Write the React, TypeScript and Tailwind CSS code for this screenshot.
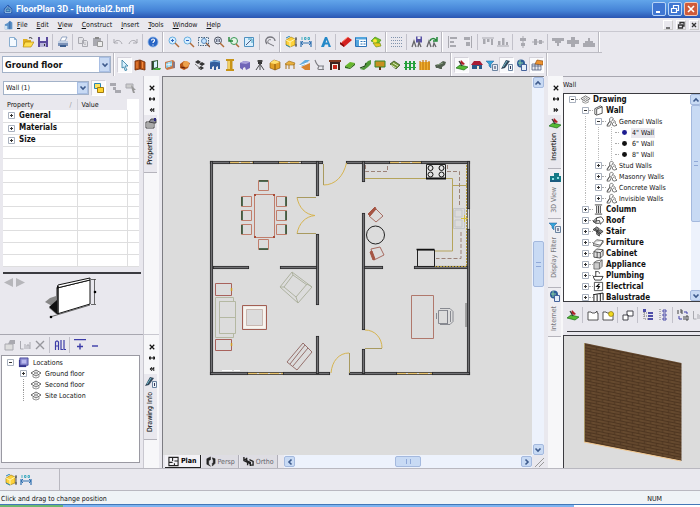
import React from "react";

type IconName = string;

const gray = "#a9a9b0";

const icons: Record<IconName, React.ReactNode> = {
  house: (<><path d="M1 6 6 1l5 5v5H1z" fill="#1d4f9f" /><path d="M2.500 6.500 6 3l3.500 3.500V10h-7z" fill="none" stroke="#bfe6ff" /><path d="M4 6h4M4 8h4" stroke="#7fd0e0" /></>),
  doc: (<><path d="M1 11V5l3-1 3-3 3 2v8z" fill="#5d92c8" /><path d="M1 7h3v4H1z" fill="#cfe2f2" /><path d="M7 2v9" stroke="#345f9c" /></>),
  new: (<><path d="M2.500 1.500h5l2 2v7h-7z" fill="#f4faff" stroke="#8aaed0" /><path d="M7.500 1.500v2h2" fill="none" stroke="#8aaed0" /></>),
  open: (<><path d="M1 3h4l1 1h3v6H1z" fill="#e0b020" /><path d="M3 6h9l-3 5H1z" fill="#ffdf50" stroke="#a87c00" strokeWidth=".6" /><path d="M7 2c2-1 3 0 3 1" stroke="#333" fill="none" /></>),
  save: (<><path d="M1 1h10v10H1z" fill="#5a4a9c" /><path d="M3 1h6v4H3z" fill="#e8e8f4" /><path d="M3 7h6v4H3z" fill="#b7b4d8" /><path d="M7 8h1v2H7z" fill="#333" /></>),
  print: (<><path d="M3 5 5 1h5L8 5z" fill="#fff" stroke="#6c84ac" strokeWidth=".7" /><path d="M1 5h10v5H1z" fill="#7d93b8" /><path d="M1 5h10v2H1z" fill="#c2d0e4" /><path d="M3 9h6v2H3z" fill="#3d5f90" /></>),
  copy: (<><path d="M1.500 1.500h4l1 1v5h-5zM5.500 4.500h4l1 1v5h-5z" fill="#e4e4e8" stroke={gray} /><path d="M7 7h2M7 8.500h2" stroke={gray} strokeWidth=".6" /></>),
  paste: (<><path d="M1 2h8v8H1z" fill={gray} /><path d="M3 1h4v2H3z" fill="#888" /><path d="M5.500 5.500h5v5h-5z" fill="#eee" stroke="#999" /></>),
  undo: (<path d="M2 3v4h4M2 7c2-4 7-3 8 1" fill="none" stroke={gray} />),
  redo: (<path d="M10 3v4H6M10 7C8 3 3 4 2 8" fill="none" stroke={gray} />),
  help: (<><circle cx="6" cy="6" r="5" fill="#2764c4" stroke="#8ab4e8" strokeWidth=".8" /><path d="M4.500 4.500c0-2 3-2 3 0 0 1-1.500 1-1.500 2.500M6 8.500v1" stroke="#fff" fill="none" strokeWidth="1.200" /></>),
  zoomin: (<><circle cx="4.500" cy="4.500" r="3.500" fill="#d8efff" stroke="#68aee0" /><path d="M3 4.500h3M4.500 3v3" stroke="#2a64c0" /><path d="m7 7 4 4" stroke="#b06a38" strokeWidth="1.500" /></>),
  zoomout: (<><circle cx="4.500" cy="4.500" r="3.500" fill="#d8efff" stroke="#68aee0" /><path d="M3 4.500h3" stroke="#2a64c0" /><path d="m7 7 4 4" stroke="#b06a38" strokeWidth="1.500" /></>),
  zoombox: (<><path d="M.5 1.500h10v8H.5z" fill="#e3eef5" stroke="#4a6480" strokeDasharray="1.500 1" /><circle cx="6" cy="5" r="2.500" fill="#c7e4ff" stroke="#5c8cc0" /><path d="m8 7 4 4" stroke="#8a5638" strokeWidth="1.400" /></>),
  pan: (<><circle cx="5" cy="4.500" r="3.500" fill="#dde6f2" stroke="#4e5260" /><path d="M3.500 6V3M5 6V2.500M6.500 6V3" stroke="#50546c" strokeWidth=".8" /><path d="m7 7 4 4" stroke="#b06a38" strokeWidth="1.500" /></>),
  zoomprev: (<><circle cx="6" cy="5" r="3.500" fill="#e4f4e4" stroke="#399858" /><path d="M1 1v4h4" stroke="#218838" fill="none" strokeWidth="1.400" /><path d="m8 8 3 3" stroke="#b06a38" strokeWidth="1.500" /></>),
  fit: (<><path d="M1.500 1.500h9v9h-9z" fill="#d8efff" stroke="#4f91c0" /><path d="m3 9 5-5" stroke="#505a80" /><path d="M5 3h4v4" fill="none" stroke="#45a0c0" /></>),
  arc: (<><path d="M3 8C0 4 3 1 6 1c3 0 5 2 5 4" fill="none" stroke="#77777e" strokeWidth="1.300" /><path d="M4 7c-1-3 2-4 3-3M4 7l6 3" stroke="#77777e" fill="none" /></>),
  box3d: (<><path d="m1 4 5-3 4 2v6l-5 2-4-2z" fill="#ffd23c" stroke="#9c7800" strokeWidth=".6" /><path d="m1 4 4 2 5-3M5 6v5" stroke="#fff6b0" fill="none" /><path d="m1 2 4-2M1 9l4 2" stroke="#2c88b8" /><path d="M11 1v10M10 3h2M10 9h2" stroke="#333" strokeWidth=".8" /></>),
  dim: (<><path d="M1 5v6M11 5v6M1 7h10" stroke="#3070b0" strokeWidth="1.200" fill="none" /><path d="m3 5-2 2 2 2M9 5l2 2-2 2" stroke="#3070b0" fill="none" /><path d="M2 1v3M4.500 1.500h1.500v2H4.500zM8 1.500h1.500v2H8z" stroke="#20a0b8" fill="none" strokeWidth=".8" /></>),
  textA: (<path d="M1 11 5 1h2l4 10H8.500L8 8.500H5L4 11zM5.500 6.500h2L6.500 4z" fill="#2388c8" fillRule="evenodd" />),
  eraser: (<><path d="m0 8 8-7 4 3-8 7z" fill="#d42020" /><path d="m0 8 4 3V9L0 6z" fill="#800c0c" /><path d="m2 6 6-5" stroke="#ff7660" /></>),
  table: (<><path d="M.5 1.500h11v9H.5z" fill="#fff" stroke="#2b72b8" /><path d="M1 1h10v2.500H1zM1 4h3v6H1z" fill="#53a5dd" /><path d="M5.500 5.500h2M8.500 5.500h2M5.500 8h2M8.500 8h2" stroke="#2b72b8" /></>),
  cash: (<><path d="m1 5 4-4 6 3-3 4z" fill="#79c421" stroke="#3c8410" strokeWidth=".6" /><circle cx="5" cy="5" r="2" fill="#ffe636" /><path d="m3 7 7 0 1 3-5 1z" fill="#e8c820" stroke="#5c8b10" strokeWidth=".6" /></>),
  grid: (<g fill="#8093ad">{[1, 4, 7, 10].map((y) => [0, 2, 4, 6, 8, 10].map((x) => <rect key={x + "-" + y} x={x} y={y} width="1" height="1" />))}</g>),
  findsave: (<><path d="M5 .5h6v6H5z" fill="#5750a4" /><path d="M6.500.5h3v2.500h-3z" fill="#eee" /><path d="M1 11 3 5l2 6M7 11l1-5 2 5" stroke="#66666a" strokeWidth="1.300" fill="none" /></>),
  findgo: (<><path d="M1 11 3 5l2 6M7 11l1-4 2 4" stroke="#66666a" strokeWidth="1.300" fill="none" /><path d="M4 5c1-3 4-3 6-1M11 1v4H7" stroke="#238838" strokeWidth="1.500" fill="none" /></>),
  alL: (<><path d="M1.500 0v12" stroke={gray} /><path d="M3 1h7v2H3zM3 5h4v2H3zM3 9h6v2H3z" fill={gray} /></>),
  alR: (<><path d="M9.500 0v12" stroke={gray} /><path d="M2 1h6v3H2zM4 6h4v4H4z" fill={gray} /></>),
  alT: (<><path d="M0 2h12" stroke={gray} /><path d="M1 3h2.500v5H1zM5 3h2.500v3H5zM9 3h2v6H9z" fill={gray} /></>),
  alB: (<><path d="M0 10h12" stroke={gray} /><path d="M1 5h2.500v4H1zM5 2h2.500v7H5zM9 6h2v3H9z" fill={gray} /></>),
  alV: (<><path d="M6 0v12" stroke={gray} /><path d="M3 2h6v3H3zM4 7h4v3H4z" fill={gray} /></>),
  alH: (<><path d="M0 6h12" stroke={gray} /><path d="M2 3h3v6H2zM7 4h3v4H7z" fill={gray} /></>),
  up: (<path d="M0 2h12v3H9v2H7v3H5V7H3V5H0z" fill={gray} />),
  mid: (<path d="M4 1h4v3h4v4H8v3H4V8H0V4h4z" fill={gray} />),
  low: (<path d="M5 2h2v3h3v2h2v4H0V7h2V5h3z" fill={gray} />),
  cursor: (<path d="m3 1 6 6H6l2 4-2 .5L5 8 3 9z" fill="#d9f1ff" stroke="#2d7aa0" strokeWidth=".8" />),
  door: (<><path d="M1 2 6 1v9l-5 1zM6 1l5 2v8L6 10z" fill="#c05818" stroke="#702c08" strokeWidth=".8" /><path d="M3 3v6M8.500 3v6" stroke="#f08a40" /></>),
  doorg: (<><path d="M3 2 9 1v8l-6 2z" fill="#345c38" /><path d="m5 3 3-1v6L5 9z" fill="#d9f1ff" /><path d="M2 11h9l1-2H9" fill="#43aa38" /><path d="M3 2v9" stroke="#222" /></>),
  window: (<><path d="m1 3 8-2 2 2v6l-8 2-2-2z" fill="#c87848" /><path d="m2 4 6-2v5L2 9z" fill="#83cce8" /><path d="M5 3v5M2 6l6-1" stroke="#fff" strokeWidth=".8" /><path d="M10 3v6" stroke="#4a78c0" /></>),
  pot: (<><path d="m1 5 4-3 6 2-2 5-4 2-4-2z" fill="#b85818" /><circle cx="7" cy="5" r="3" fill="#eda24c" /><path d="m2 8 4 1" stroke="#60200a" /></>),
  blocks: (<><path d="m1 3 3-2 3 2-3 2zM5 5l3-2 3 2-3 2zM4 9l3-2 3 2-3 2z" fill="#333" /><path d="m1 5 6 5" stroke="#777" /></>),
  wall: (<><path d="m1 3 4-2 6 1v8H9V7L7 8v3H5V7L3 8v2H1z" fill="#315c9c" /><path d="m1 3 4-1 6 1" stroke="#89c0ef" fill="none" /></>),
  column: (<><path d="M2 0h8v2H8.500v8H10v2H2v-2h1.500V2H2z" fill="#c89418" /><path d="M5 2v8" stroke="#ffe480" strokeWidth="1.500" /></>),
  purple: (<><path d="m1 4 4-2 6 1v6l-4 2-1-3-2 1v2L1 9z" fill="#7066b8" /><path d="m1 4 4-2 6 1-4 2z" fill="#aaa2dc" /></>),
  tripod: (<><path d="M4 1h4v4H4z" fill="#333" /><path d="M6 4v7M6 5l-4 6M6 5l4 6" stroke="#48484c" /><path d="M3 2h6" stroke="#555" /></>),
  cube: (<><path d="m1 4 4-3 6 2v6l-5 2-5-2z" fill="#e1a025" stroke="#805008" strokeWidth=".6" /><path d="m1 4 4-3 6 2-5 2z" fill="#ffe070" /><path d="M6 5v6" stroke="#805008" /></>),
  stool: (<><path d="m1 5 4-3 6 2-1 2H3z" fill="#e9b040" stroke="#9a6810" strokeWidth=".6" /><path d="M2 5v5M5 6v4M10 5v5" stroke="#a87018" /></>),
  ramp: (<><path d="m0 6 6-5h5L4 7z" fill="#65aee0" /><path d="m2 8 9-4v7H6z" fill="#d88430" /><path d="m0 7 8-3" stroke="#fff" /></>),
  chair: (<path d="M1 1c1 3 2 5 4 6h5M5 7c-1 2-2 3 0 3.500h5M9 7v3" stroke="#7d7d83" strokeWidth="1.100" fill="none" />),
  fire: (<><path d="M0 1h12v2H0z" fill="#803c20" /><path d="M1 3h10v8H1z" fill="#3b241c" /><path d="M3 5h6v6H3z" fill="#f2eee0" /><path d="M4 6h4v4H4z" fill="#c82818" /></>),
  green1: (<><path d="m1 7 5-4 5 1-5 5z" fill="#68b82c" /><path d="m1 7 5 2 5-5v2L6 10 1 9z" fill="#2f6c18" /></>),
  green2: (<><path d="M1 10 7 7V4l2-2 3-1v4L9 8l-4 3z" fill="#4f9838" /><path d="m1 9 5-2 1-3" stroke="#204c18" fill="none" strokeWidth="1.200" /></>),
  sign: (<><path d="M1 2h10v6H1z" fill="#c89020" stroke="#32882c" /><path d="M5 8h2v3H5z" fill="#603810" /></>),
  green3: (<><path d="m1 5 4-3 6 4-4 4z" fill="#759838" stroke="#284418" strokeWidth=".7" /><path d="m2 6 5 3M4 4l5 3" stroke="#dce8c0" /></>),
  fenceg: (<path d="M1 2h2v9H1zM5 2h2v9H5zM9 2h2v9H9zM0 4h12v1H0zM0 8h12v1H0z" fill="#25a03c" />),
  fencey: (<><path d="M1 3h10v8H1z" fill="#f0b030" /><path d="M1 2v9M4 1v10M7 1v10M10 2v9" stroke="#c37b10" strokeWidth="1.200" /></>),
  rock: (<><path d="m1 6 4-1 4-3 3 1-1 3-3 2v2H6L4 9H2z" fill="#526050" /><path d="m3 6 6-2" stroke="#88a080" /></>),
  insert: (<><path d="m0 9 4-3 8 2-4 3z" fill="#57bb34" stroke="#1d6a1a" strokeWidth=".7" /><path d="m5 1 4 4-2 1-3-2z" fill="#b02028" /><path d="m3 2 3 5" stroke="#333" strokeWidth="1.200" /></>),
  home: (<><path d="M0 6 3 2h6l3 4z" fill="#a81c34" /><path d="M1 6h10v4H1z" fill="#285888" /><path d="M6 7h2v3H6z" fill="#f4e8d0" /></>),
  filter: (<><path d="M0 2h8L5 5v4L3 7V5z" fill="#36a4d8" stroke="#205a98" strokeWidth=".5" /><path d="M6.500 5.500h5v6h-5z" fill="#e6edf5" stroke="#6a83a0" /><path d="M9 7v3" stroke="#335" /></>),
  pen: (<><path d="M0 10 5 1l4 1-5 7z" fill="#33485c" /><path d="m2 8 4-6" stroke="#70b8c8" /><path d="M7.500 5.500h4v6h-4z" fill="#eef5fa" stroke="#6a83a0" /><path d="M9.500 7v3" stroke="#335" /></>),
  world: (<><circle cx="5" cy="4.500" r="4" fill="#2d5c98" /><path d="M2 4h5M4 1v6" stroke="#88d0a0" /><path d="M5.500 5.500h5v6h-5z" fill="#e5eef9" stroke="#44629a" /></>),
  hand: (<><path d="M1 5h9v6H1z" fill="#e8e8ee" stroke="#506080" strokeWidth=".8" /><path d="M4 5 6 1l6 1v4z" fill="#ed9230" stroke="#85450c" strokeWidth=".6" /><path d="M1 7h9M4 5v6M7 5v6" stroke="#506080" strokeWidth=".8" /></>),
  propg: (<><path d="M1 5h8v6H1z" fill="#ddd" stroke={gray} /><path d="M4 5 6 1h5v4z" fill={gray} /></>),
  props: (<><path d="M1 5h8v6H1z" fill="#fff" stroke="#444" /><path d="M4 5 6 2h5v4H9z" fill="#8c8c98" stroke="#222" strokeWidth=".7" /><path d="M9 1h2v3H9z" fill="#2e2a80" /><path d="M2 7h6M2 9h6" stroke="#555" /></>),
  selY: (<><path d="M1.500 1.500h6v5h-6z" fill="#ffe25c" stroke="#2a86b0" /><path d="M4.500 5.500h6v5h-6z" fill="#ffd22a" stroke="#a07c10" /></>),
  selG: (<><path d="M1 1h6v3H1zM4 5h3v3H4zM6 8h6v3H6z" fill={gray} /></>),
  selC: (<><path d="M1 2h7v4H1z" fill="#ccc" stroke={gray} /><path d="m6 3 5 5H9l1 3H8L7 8z" fill="#999" /></>),
  linkg: (<path d="M1.500 2v8h3M6 5v5M8 10V6h2v4M11 3v7" fill="none" stroke={gray} />),
  del: (<path d="m2 2 8 8M10 2l-8 8" stroke="#97979d" strokeWidth="1.400" />),
  all: (<path d="M1.500 11V3l1-1h1l1 1v8M1.500 7h3M7 1v10M7 10.500h2M10 1v10M10 10.500h2" fill="none" stroke="#3c3ca8" strokeWidth="1.200" />),
  plus: (<path d="M0 .5h12M6 4.500v6M3 7.500h6" stroke="#3c3ca8" strokeWidth="1.400" />),
  minus: (<path d="M3 7h6" stroke="#3c3ca8" strokeWidth="1.400" />),
  locs: (<><path d="M1 3h8v8H1z" fill="#34348c" /><path d="M2 1h9v8H2z" fill="#8c8cd0" stroke="#34348c" strokeWidth=".8" /><path d="M4 3h5v4H4z" fill="#b9b9ee" /></>),
  layer: (<><path d="m1 5 5-3 5 3-5 3z" fill="#fff" stroke="#444" strokeWidth=".8" /><path d="m4 5 2-1 2 1-2 1zM3 7v2l3 1 3-1V7" fill="none" stroke="#777" strokeWidth=".8" /></>),
  tWall: (<path d="m2 4 6-3 2 1v7l-6 2-2-1zM4 4.500v6M4 4.500 10 2" fill="#fff" stroke="#222" strokeWidth=".8" />),
  tGroup: (<path d="m1 10 3-4V3l2-2 2 2-2 3M4 6l2 1-2 4H1zM8 4l2 2v2l2 2-3 1-2-1V8l2-2" fill="none" stroke="#444" strokeWidth=".8" />),
  tColumn: (<path d="M2 1h8M2 11h8M4 2v8M8 2v8M6 2v8" stroke="#222" strokeWidth=".9" />),
  tRoof: (<path d="m0 7 4-4 5-1 3 4-4 4-1-4zM4 3 3 9 0 7M3 9h4" fill="none" stroke="#222" strokeWidth=".9" />),
  tStair: (<path d="m0 4 4-3 3 2-3 3zM4 6l4-2 3 2-4 3zM4 6v3l3 2V9M2 3l7 6" fill="#888" stroke="#222" strokeWidth=".8" />),
  tFurn: (<path d="m0 7 4-4 7 1-3 5zM0 7v2l7 2 4-5V4" fill="#ddd" stroke="#444" strokeWidth=".8" />),
  tCab: (<path d="m1 4 3-3 7 1v6l-3 3-7-1zM1 4l7 1 3-3M8 5v6M4.500 4.500v6" fill="#ddd" stroke="#222" strokeWidth=".8" />),
  tApp: (<path d="m1 4 3-2 6-1v7l-3 3H1zM1 4h6l3-3M7 4v7" fill="#ccc" stroke="#555" strokeWidth=".8" />),
  tPlumb: (<path d="M3 1v6M3 2c3-1 4 0 4 2M0 7h11l-2 4H2z" fill="#fff" stroke="#222" strokeWidth=".9" />),
  tElec: (<><path d="M1.500 1.500h9v9h-9z" fill="#fff" stroke="#333" strokeWidth=".9" /><path d="m7 3-3 3h3L5 9" stroke="#111" fill="none" strokeWidth="1.200" /></>),
  tBal: (<path d="M0 3 11 1M1 3v8M4.500 3v8M8 2v8M11 1v8" stroke="#222" strokeWidth="1.100" />),
  dotB: (<circle cx="6" cy="6" r="2.700" fill="#1c1c90" />),
  dotK: (<circle cx="6" cy="6" r="2.700" fill="#111" />),
  folder: (<path d="M1 3h3l1 1h3l2-2v2h1v7H1z" fill="#fff" stroke="#444" strokeWidth=".9" />),
  foldery: (<><path d="M1 3h3l1 1h6v7H1z" fill="#fff" stroke="#444" strokeWidth=".9" /><circle cx="9" cy="5" r="2.500" fill="#f0d820" stroke="#806c00" strokeWidth=".6" /></>),
  multi: (<path d="M1 6h5v5H1zM5 2h6v5H6V6H5z" fill="#fff" stroke="#44444c" />),
  treeI: (<><path d="M2 1v9h4M2 4h4M2 7h4" fill="none" stroke="#777" strokeDasharray="1 1" /><path d="M1 0h3v3H1zM6 3h5v2H6zM6 6h5v2H6zM6 9h5v2H6z" fill="#4d4da8" /></>),
  listI: (<><path d="M3 0v12" stroke="#777" strokeDasharray="1 1" /><path d="M6 1h3v2H6zM6 5h3v2H6zM6 9h3v2H6z" fill="none" stroke="#4d4da8" /></>),
  swap: (<><path d="M1 1v4M3 1h2v4M5 3H3M7 7v4M9 7h2v4H9z" fill="none" stroke="#444" /><path d="M7 3h3v2M2 7v3h3" fill="none" stroke="#3c3ca8" /></>),
  view3: (<><path d="M1 5h4V2h5v3h2v6H1z" fill="#157a86" /><path d="M3 7h2v2H3zM8 6h2v2H8z" fill="#8ee0e4" /><path d="M1 10h10" stroke="#223b78" /></>),
  planI: (<path d="M1 1.500h10v9H1zM5 1.500v4M1 7h4M7 5.500h4M7 8v2.500" fill="none" stroke="#222" strokeWidth="1.200" />),
  perspI: (<path d="m2 3 4-2v3L4 5v4l2 2-4-2zM8 2l3 1v5L8 11V8l1-1V5z" fill="#222" stroke="#222" strokeWidth=".6" />),
  orthoI: (<path d="M1 1v4l4 2v3M4 2v3l4 2v4M7 4l4 2v4H8M2 3l6 6" fill="none" stroke="#222" strokeWidth="1.500" />),
};

function Icon({ n, c = "size-3" }: { n: IconName; c?: string }) {
  return (
    <svg viewBox="0 0 12 12" className={"shrink-0 " + c} aria-hidden="true">
      {icons[n]}
    </svg>
  );
}

function Tool({ n, on }: { n: IconName; on?: boolean }) {
  return (
    <button type="button" aria-label={n} className={"flex h-4 w-[15px] shrink-0 items-center justify-center " + (on ? "border border-[#d4d2da] border-r-white border-b-white bg-[#fafafc]" : "")}>
      <Icon n={n} />
    </button>
  );
}

function Tools({ names, on = [] }: { names: string[]; on?: string[] }) {
  return <>{names.map((n, i) => <Tool key={i} n={n} on={on.includes(n)} />)}</>;
}

const Sep = () => <span className="mx-[2px] h-4 w-px shrink-0 bg-[#c2c1ca]" />;
const Edge = () => <span className="mx-[2px] w-[2px] shrink-0 self-stretch border-r border-white bg-[#b9b8c0]" />;

function Chevron({ d = "down" }: { d?: "down" | "up" | "left" | "right" }) {
  const p = { down: "m1.500 2.500 2.500 2.500L6.500 2.500", up: "M1.500 5.500 4 3l2.500 2.500", left: "M5.500 1.500 3 4l2.500 2.500", right: "M2.500 1.500 5 4 2.500 6.500" }[d];
  return <svg viewBox="0 0 8 8" className="size-2" aria-hidden="true"><path d={p} fill="none" stroke="#3d5a8c" strokeWidth="1.600" /></svg>;
}

function ScrollBtn({ d }: { d: "down" | "up" | "left" | "right" }) {
  return (
    <button type="button" aria-label={"Scroll " + d} className="flex size-[11px] shrink-0 items-center justify-center rounded-xs border border-[#a4b9de] bg-[#c8daf4]">
      <Chevron d={d} />
    </button>
  );
}

function Combo({ label, value, cls }: { label: string; value: string; cls: string }) {
  return (
    <div className={"relative border border-[#a3b2c8] bg-white " + cls}>
      <select aria-label={label} defaultValue={value} className="block size-full appearance-none bg-transparent pl-[2px] outline-none">
        <option>{value}</option>
      </select>
      <span className="pointer-events-none absolute inset-y-0 right-0 flex w-[11px] items-center justify-center border border-[#a9bfe4] bg-[#c8daf4]">
        <Chevron />
      </span>
    </div>
  );
}

const menus = ["File", "Edit", "View", "Construct", "Insert", "Tools", "Window", "Help"];

function TitleBar() {
  return (
    <header className="flex h-[18px] items-center bg-linear-to-b from-[#62a5ea] via-[#4482d6] via-60% to-[#2a55b2] pr-[2px] pl-[3px]">
      <Icon n="house" c="size-[10px]" />
      <h1 className="ml-[3px] flex-1 font-[Roboto,'Liberation_Sans',sans-serif] text-[9px] leading-3 font-bold text-white">FloorPlan 3D - [tutorial2.bmf]</h1>
      <div className="flex gap-[2px]">
        <button type="button" aria-label="Minimize" className="flex size-[14px] items-center justify-center rounded-xs border border-[#b8d4f6] bg-[#3f76d2]">
          <svg viewBox="0 0 10 10" className="size-[10px]"><path d="M2 8h4" stroke="#fff" strokeWidth="2" /></svg>
        </button>
        <button type="button" aria-label="Restore" className="flex size-[14px] items-center justify-center rounded-xs border border-[#b8d4f6] bg-[#3f76d2]">
          <svg viewBox="0 0 10 10" className="size-[10px]"><path d="M1.500 4.500h5v4h-5zM3.500 4V1.500h5v5H7" fill="none" stroke="#fff" strokeWidth="1.200" /></svg>
        </button>
        <button type="button" aria-label="Close" className="flex size-[14px] items-center justify-center rounded-xs border border-[#f0c8b8] bg-[#cf5a3a]">
          <svg viewBox="0 0 10 10" className="size-[10px]"><path d="m2 2 6 6M8 2 2 8" stroke="#fff" strokeWidth="1.600" /></svg>
        </button>
      </div>
    </header>
  );
}

function MenuBar() {
  return (
    <nav className="flex h-[13px] items-center pr-[1px] pl-[4px]">
      <Icon n="doc" c="size-[10px]" />
      <div className="ml-[3px] flex flex-1 gap-[9px]">
        {menus.map((m) => (
          <button key={m} type="button"><span className="underline">{m[0]}</span>{m.slice(1)}</button>
        ))}
      </div>
      <div className="flex gap-[3px]">
        {["M2 7h4", "M1.500 4h4v3h-4zM3 3V1.500h4V5H6", "m2 2 4 4M6 2 2 6"].map((d, i) => (
          <button key={d} type="button" aria-label={["Minimize drawing", "Restore drawing", "Close drawing"][i]} className="flex size-[10px] items-center justify-center border border-white border-r-[#ccc] border-b-[#ccc]">
            <svg viewBox="0 0 8 8" className="size-2"><path d={d} fill="none" stroke="#333" strokeWidth="1.300" /></svg>
          </button>
        ))}
      </div>
    </nav>
  );
}

function Toolbars() {
  return (
    <>
      <div role="toolbar" aria-label="Standard" className="flex h-[22px] border-t border-[#c9c8d0]">
        <div className="flex items-center border-b border-[#bdbcc4] pl-[5px]">
          <Tools names={["new", "open", "save"]} /><Sep />
          <Tools names={["print"]} /><Sep />
          <Tools names={["copy", "paste"]} /><Sep />
          <Tools names={["undo", "redo"]} /><Sep />
          <Tools names={["help"]} /><Edge />
          <div className="flex w-[91px] justify-between"><Tools names={["zoomin", "zoomout", "zoombox", "pan", "zoomprev", "fit"]} /></div><Sep />
          <Tools names={["arc"]} /><Edge />
          <Tools names={["box3d", "dim"]} /><Sep />
          <Tools names={["textA"]} /><Sep />
          <Tools names={["eraser", "table", "cash"]} /><Edge />
          <Tools names={["grid"]} /><Sep />
          <Tools names={["findsave", "findgo"]} /><Edge />
          <Tools names={["alL", "alR"]} /><Sep />
          <Tools names={["alT", "alB"]} /><Sep />
          <Tools names={["alV", "alH"]} /><Sep />
          <div className="flex w-[46px] justify-between"><Tools names={["up", "mid", "low"]} /></div><Edge />
        </div>
      </div>
      <div role="toolbar" aria-label="Building" className="flex h-[23px]">
        <div className="flex items-center pl-[2px]">
          <Combo label="Floor" value="Ground floor" cls="h-[17px] w-[109px] text-[9px] font-bold" />
          <Edge />
          <div className="flex w-[331px] justify-between">
            <Tools on={["cursor"]} names={["cursor", "door", "doorg", "window", "pot", "blocks", "wall", "column", "purple", "tripod", "cube", "stool", "ramp", "chair", "fire", "green1", "green2", "sign", "green3", "fenceg", "fencey", "rock"]} />
          </div>
          <Edge />
          <Tools on={["insert", "pen", "hand"]} names={["insert", "home", "filter", "pen", "world", "hand"]} />
          <Edge />
        </div>
      </div>
    </>
  );
}

function StripControls({ side }: { side: "l" | "r" }) {
  return (
    <div className="flex flex-col items-center pt-[6px]">
      {[["Close", "m1 1 6 6M7 1 1 7"], ["Resize", "M0 4h8M2 2 0 4l2 2M6 2l2 2-2 2"], ["Collapse", side === "l" ? "M4 2 2 4l2 2M7 2 5 4l2 2" : "m1 2 2 2-2 2M4 2l2 2-2 2"]].map(([a, d]) => (
        <button key={a} type="button" aria-label={a} className="flex h-[11px] items-center">
          <svg viewBox="0 0 8 8" className="size-[6px]"><path d={d} fill="none" stroke="#111" strokeWidth="1.600" /></svg>
        </button>
      ))}
    </div>
  );
}

function SideTab({ icon, label, active, cls }: { icon: string; label: string; active?: boolean; cls: string }) {
  return (
    <button type="button" className={"flex w-[13px] shrink-0 flex-col items-center gap-1 border-b border-[#b5b4bc] pt-[2px] " + (active ? "bg-[#e9e8ee] text-black " : "bg-[#efeef2] text-[#77777c] ") + cls}>
      <Icon n={icon} />
      <span className="rotate-180 text-[7px] leading-[9px] whitespace-nowrap [writing-mode:vertical-rl]">{label}</span>
    </button>
  );
}

function Expander({ open }: { open?: boolean }) {
  return (
    <button type="button" aria-label={open ? "Collapse" : "Expand"} className="size-[7px] shrink-0 bg-white">
      <svg viewBox="0 0 7 7" className="size-[7px]"><path d="M.5.5h6v6h-6z" fill="none" stroke="#a9b1be" /><path d={open ? "M2 3.500h3" : "M2 3.500h3M3.500 2v3"} stroke="#333" /></svg>
    </button>
  );
}

function PropertyPanel() {
  const names = ["General", "Materials", "Size", "", "", "", "", "", "", "", "", "", ""];
  return (
    <section aria-label="Properties" className="flex h-[259px] flex-col border-b border-[#a8a7b0] pr-[2px] pl-[3px]">
      <div className="flex h-[23px] items-center gap-[1px]">
        <Combo label="Selection" value="Wall (1)" cls="mr-px h-[14px] w-[86px]" />
        <Tools on={["selY"]} names={["selY", "selG", "selC"]} />
      </div>
      <table className="w-[136px] table-fixed border-collapse bg-white">
        <thead>
          <tr className="h-[11px] bg-[#e9e8ee] text-left">
            <th className="w-[74px] border-r border-[#d0d0d8] pl-[4px] font-normal"><span className="flex justify-between pr-[5px]">Property<span className="text-[#999]">/</span></span></th>
            <th className="w-[50px] pl-[4px] font-normal">Value</th>
            <th className="bg-white" aria-label="Extra" />
          </tr>
        </thead>
        <tbody>
          {names.map((n, i) => (
            <tr key={i} className="h-[12px] border-b border-[#dededf]">
              <td className="border-r border-[#dededf] p-0 pl-[5px] text-[8px] font-bold">
                {n && <span className="flex items-center gap-[4px]"><Expander />{n}</span>}
              </td>
              <td className="border-r border-[#dededf] p-0" />
              <td className="p-0" />
            </tr>
          ))}
        </tbody>
      </table>
      <div className="mt-auto h-[62px] border-t-2 border-[#3b3b40]">
        <div className="flex">
          <div className="flex gap-px pt-[3px]">
            {["M10 0v10L0 5z", "M0 0v10l10-5z"].map((d, i) => (
              <button key={d} type="button" aria-label={i ? "Next" : "Previous"} className="h-[10px]"><svg viewBox="0 0 10 10" className="h-[9px] w-[11px]"><path d={d} fill="#b6b6ba" /></svg></button>
            ))}
          </div>
          <svg viewBox="45 276 54 44" className="mt-[3px] ml-[19px] h-[44px] w-[54px]" aria-label="Wall preview">
            <path d="m45 301 5-4 6-2v18l-7-6 3-2z" fill="#888" /><path d="m49 306 8-7v14z" fill="#111" />
            <path d="M57 287 90 279v24l-33 10z" fill="#fff" stroke="#111" />
            <path d="m57 287 1-3 32-7v2z" fill="#fff" stroke="#111" />
            <path d="M58 285v28" stroke="#111" strokeWidth="1.500" />
            <path d="m50 316 40-12M94.500 278v25M91 278.500h5M91 303.500h5" stroke="#444" strokeWidth=".8" />
            <circle cx="51" cy="316" r="1.300" /><circle cx="95" cy="291" r="1.300" />
          </svg>
        </div>
      </div>
    </section>
  );
}

function LocationPanel() {
  return (
    <section aria-label="Drawing Info" className="flex flex-1 flex-col pr-[3px] pb-[5px] pl-[1px]">
      <div className="flex h-[20px] items-center pl-px">
        <Tools names={["propg", "linkg", "del"]} /><Sep /><Tools names={["all"]} /><Sep /><Tools names={["plus", "minus"]} />
      </div>
      <ul className="flex-1 border border-[#9a99a2] bg-white pt-[1px]">
        <li className="flex h-[11px] items-center gap-[4px] pl-[5px]"><Expander open /><Icon n="locs" c="size-[11px]" />Locations</li>
        {["Ground floor", "Second floor", "Site Location"].map((t, i) => (
          <li key={t} className="flex h-[11px] items-center gap-[3px] pl-[18px]">
            {i === 0 ? <Expander /> : <span className="ml-[3px] h-full w-[4px] border-l border-dotted border-[#999]" />}
            <Icon n="layer" />{t}
          </li>
        ))}
      </ul>
    </section>
  );
}

const wallFill = "#717174";

function FloorPlan() {
  const walls: [number, number, number, number][] = [
    [210, 161, 20, 3], [253, 161, 26, 3], [301, 161, 22, 3], [346, 161, 44, 3], [421, 161, 49, 3],
    [210, 161, 3, 214], [467, 161, 3, 48], [467, 229, 3, 146],
    [210, 372, 38, 3], [283, 372, 47, 3], [349, 372, 48, 3], [432, 372, 38, 3],
    [316, 161, 3, 35], [316, 234, 3, 71], [316, 336, 3, 38],
    [362, 161, 3, 21], [362, 213, 3, 117], [362, 349, 3, 25],
    [213, 266, 36, 3], [280, 266, 37, 3], [364, 266, 19, 3], [414, 266, 54, 3],
  ];
  const chairs: [number, number, number][] = [[258, 180, 90], [258, 239, 270], [241, 196, 0], [241, 210, 0], [241, 224, 0], [276, 196, 180], [276, 210, 180], [276, 224, 180]];
  return (
    <svg viewBox="208 158 264 220" className="h-[220px] w-[264px] shrink-0" fill="none" role="img" aria-label="Ground floor plan">
      <g>
        {[[230, 161, 23], [279, 161, 22], [390, 161, 31], [248, 372, 35], [397, 372, 35]].map(([x, y, w]) => (
          <g key={x + "-" + y}><path d={`M${x} ${y + 0.5}h${w}M${x} ${y + 2.5}h${w}`} stroke="#5c5446" /><path d={`M${x} ${y + 1.5}h${w}`} stroke="#e6c069" strokeDasharray="9 2" /></g>
        ))}
        <path d="M467.500 209v20M469.500 209v20M466 303v24" stroke="#666" />
      </g>
      <g fill={wallFill} stroke="#2b2b2d" strokeWidth=".9">
        {walls.map(([x, y, w, h], i) => <rect key={i} x={x + 0.4} y={y + 0.4} width={w - 0.8} height={h - 0.8} />)}
      </g>
      <g stroke="#d6b450">
        <path d="M323.500 185c12 0 20-9 23-22M297 197.500c2 10 8 17 18 18-10 1-16 8-18 18M331 373c1-12 8-20 18-20M365 330c10 0 17 8 17 18" />
        <path d="M323.500 164v21M297 197.500h19M297 233.500h19M349.500 353v20M365 348.500h17" stroke="#a89a60" />
      </g>
      <g stroke="#c07e6c">
        <path d="M254.500 194.500h20v43h-20z" />
        {chairs.map(([x, y, r], i) => (
          <g key={i} transform={`rotate(${r} ${x + 5.5} ${y + 5.5})`}><path d={`M${x + 0.5} ${y + 0.5}h10v10h-10z`} /><path d={`M${x + 1} ${y + 1}v9`} stroke="#2c5134" strokeWidth="1.600" /></g>
        ))}
      </g>
      <g fill="#a84c38">{[254, 273].map((x) => [194, 236].map((y) => <rect key={x + "-" + y} x={x} y={y} width="2" height="2" />))}</g>
      <path d="M215.500 283.500h16v12h-16zM215.500 339.500h16v11h-16z" stroke="#a8625c" /><path d="M231.500 288v3M231.500 343v3" stroke="#cf9c20" strokeWidth="1.500" />
      <path d="M215.500 297.500h18v4h-14v32h14v4h-18zM219.500 301.500h16v32h-16M219.500 317.500h16" stroke="#b4b8a2" />
      <path d="M242.500 305.500h24v24h-24z" stroke="#a35e52" /><path d="M245 308h19v19h-19z" stroke="#f8f4ee" strokeWidth="3" /><path d="M246.500 309.500h16v16h-16z" stroke="#b9a49c" strokeWidth=".7" />
      <path d="m280 287 12-15 20 15-14 16zM292 272l1 3-9 12-4 0M284 287l12 10 2 6M296 297l11-13 5 3M293 275l14 10" stroke="#aeb2a0" />
      <path d="m287 362 16-19 9 9-15 18zM293 366l15-18M290 364l15-19" stroke="#96706c" />
      <path d="M222 370.500h10M234 370.500h6" stroke="#fff" />
      <path d="M365 178.500h61M446 178.500h6.500V251H435M452.500 185.500H467" stroke="#b5a45c" />
      <path d="M365.500 165v6.500h22V165M447 171.500h12.500V206M447.500 165v6M461 232v26.500h-25" stroke="#9b8278" strokeDasharray="4 2" />
      <path d="M466.500 165v101.500H435" stroke="#b79d3c" strokeDasharray="2 1" />
      <path d="M426.500 164.500h19v14h-19z" stroke="#222" fill="#e4e4e4" /><path d="M426 178.500h20" stroke="#111" strokeWidth="2" />
      <g stroke="#111">{[430.500, 441.500].map((x) => [168, 174.500].map((y) => <circle key={x + "-" + y} cx={x} cy={y} r="2.500" />))}</g>
      <path d="M453.500 208.500h11v20h-11zM455 210h7v7h-7zM455 220h7v7h-7z" stroke="#c3c5c8" /><path d="M461 218.500h7M464.500 215v7" stroke="#d6bd3c" />
      <path d="M417.500 250h17v16.500h-17z" stroke="#222" /><path d="M416.500 249.500h18" stroke="#111" strokeWidth="1.500" />
      <circle cx="375.500" cy="235" r="9" stroke="#222" />
      <path d="m369 216 7-7 7 7-7 6zM371 249l9-2 4 8-10 5z" stroke="#a66b60" /><path d="m368 214 7-7 1 2-6 7zM370 252l3 8 2-1-3-8z" fill="#a55544" stroke="#a55544" />
      <path d="M411.500 295.500h22v43h-22z" stroke="#b0786c" />
      <path d="M438.500 310.500h9v13h-9zM440 308.500h10l3 3v10l-3 3h-10M447.500 310v14M450.500 311v11M436.500 313v6" stroke="#7e8088" strokeWidth=".9" />
    </svg>
  );
}

function DrawingArea() {
  const tabs: [string, string][] = [["planI", "Plan"], ["perspI", "Persp"], ["orthoI", "Ortho"]];
  return (
    <main className="flex min-w-0 flex-1 flex-col border-t border-l border-[#7c7c82] bg-[#e9e8ee]">
      <div className="flex flex-1">
        <div className="flex flex-1 items-center justify-center bg-[#dcdcdc] pt-[3px] pr-[16px]"><FloorPlan /></div>
        <div className="flex w-[12px] flex-col items-center bg-[#edf2fc]">
          <ScrollBtn d="up" />
          <div className="flex-[42]" />
          <div className="flex h-[46px] w-[11px] items-center justify-center rounded-xs border border-[#a4b9de] bg-[#c8daf4]"><span className="h-[5px] w-[5px] border-y border-[#8fa8d8]" /></div>
          <div className="flex-[43]" />
          <ScrollBtn d="down" />
        </div>
      </div>
      <div className="flex h-[13px]">
        <div role="tablist" className="flex pl-[2px]">
          {tabs.map(([i, t], k) => (
            <button key={t} type="button" role="tab" aria-selected={k === 0} className={"mr-px flex items-center gap-[2px] border-r px-[3px] " + (k === 0 ? "border-b border-[#222] bg-[#f3f2f6] font-bold text-black" : "border-[#b0afb8] bg-[#dedde3] text-[#66666c]")}>
              <Icon n={i} c="size-[11px]" />{t}
            </button>
          ))}
        </div>
        <div className="ml-auto flex w-[248px] items-center justify-between bg-[#edf2fc]">
          <ScrollBtn d="left" />
          <div className="flex h-[11px] w-[26px] items-center justify-center rounded-xs border border-[#a4b9de] bg-[#c8daf4]"><span className="h-[5px] w-[5px] border-x border-[#8fa8d8]" /></div>
          <ScrollBtn d="right" />
        </div>
        <svg viewBox="0 0 12 12" className="size-[12px]"><path d="M3 12 12 3M7 12l5-5" stroke="#999" /></svg>
      </div>
    </main>
  );
}

type Node = { l: number; t: string; i: string; open?: boolean; leaf?: boolean; sel?: boolean };
const tree: Node[] = [
  { l: 0, t: "Drawing", i: "layer", open: true }, { l: 1, t: "Wall", i: "tWall", open: true },
  { l: 2, t: "General Walls", i: "tGroup", open: true },
  { l: 3, t: '4" Wall', i: "dotB", leaf: true, sel: true }, { l: 3, t: '6" Wall', i: "dotK", leaf: true }, { l: 3, t: '8" Wall', i: "dotK", leaf: true },
  { l: 2, t: "Stud Walls", i: "tGroup" }, { l: 2, t: "Masonry Walls", i: "tGroup" }, { l: 2, t: "Concrete Walls", i: "tGroup" }, { l: 2, t: "Invisible Walls", i: "tGroup" },
  { l: 1, t: "Column", i: "tColumn" }, { l: 1, t: "Roof", i: "tRoof" }, { l: 1, t: "Stair", i: "tStair" }, { l: 1, t: "Furniture", i: "tFurn" }, { l: 1, t: "Cabinet", i: "tCab" },
  { l: 1, t: "Appliance", i: "tApp" }, { l: 1, t: "Plumbing", i: "tPlumb" }, { l: 1, t: "Electrical", i: "tElec" }, { l: 1, t: "Balustrade", i: "tBal" },
];

function CatalogPanel() {
  return (
    <section aria-label="Insertion catalog" className="flex min-w-0 flex-1 flex-col border-t border-[#a8a7b0]">
      <p className="flex h-[16px] items-center">Wall</p>
      <div className="flex h-[209px] border border-r-0 border-[#3b3b40] bg-white">
        <ul className="flex-1 overflow-hidden">
          {tree.map((n) => (
            <li key={n.t} className="flex h-[11px] items-center pl-[5px] whitespace-nowrap">
              {Array.from({ length: n.l }, (_, k) => (
                <span key={k} className={"h-full w-[13px] shrink-0 " + (k ? "bg-[linear-gradient(#bbb_50%,transparent_50%)] bg-[length:1px_2px] bg-[position:3px_0] bg-repeat-y" : "")} />
              ))}
              {n.leaf ? <span className="h-full w-[7px] bg-[linear-gradient(#bbb_50%,transparent_50%)] bg-[length:1px_2px] bg-[position:3px_0] bg-repeat-y" /> : <Expander open={n.open} />}
              <span className="w-[4px] border-t border-dotted border-[#aaa]" />
              <Icon n={n.i} c="size-[11px]" />
              <span className={"ml-px px-px " + (n.l < 2 ? "text-[8px] font-bold" : "") + (n.sel ? " bg-[#e9e8ee]" : "")}>{n.t}</span>
            </li>
          ))}
        </ul>
        <div className="flex w-[9px] flex-col items-center bg-[#edf2fc]">
          <ScrollBtn d="up" />
          <div className="flex h-[117px] w-[10px] items-center justify-center rounded-xs border border-[#a4b9de] bg-[#c8daf4]"><span className="h-[5px] w-[4px] border-y border-[#8fa8d8]" /></div>
          <div className="flex-1" />
          <ScrollBtn d="down" />
        </div>
      </div>
      <div className="flex h-[29px] items-center overflow-hidden pb-[3px] pl-[2px]">
        <Tools names={["insert"]} /><Sep /><Tools names={["folder", "foldery"]} /><Sep /><Tools names={["multi"]} /><Sep /><Tools names={["treeI", "listI"]} /><Sep /><Tools names={["swap", "linkg"]} />
      </div>
      <div className="mb-[3px] ml-[4px] border-t border-[#3b3b40]" />
      <div className="flex flex-1 items-center justify-center border-t border-l border-[#3b3b40] bg-[#dcdcdc] pt-[2px] pl-[2px]">
        <svg viewBox="583 341 102 124" className="h-[124px] w-[102px]" role="img" aria-label="Brick wall preview">
          <defs>
            <pattern id="brick" width="12" height="6" patternUnits="userSpaceOnUse" patternTransform="skewY(11.500)">
              <rect width="12" height="6" fill="#63472d" /><path d="M0 .5h12M0 3.500h12M3.500 0v3M9.500 3v3" stroke="#49321e" strokeWidth=".8" /><path d="M5 2h3M0 5h4" stroke="#6f5134" strokeWidth=".6" />
            </pattern>
          </defs>
          <path d="m585.500 343 97 20v98l-97-19z" fill="url(#brick)" />
          <path d="M585.500 343v99" stroke="#a89868" /><path d="m585 442 97 19" stroke="#f2c890" />
        </svg>
      </div>
    </section>
  );
}

export default function App() {
  return (
    <div className="flex min-h-screen w-full flex-col bg-[#e9e8ee] font-['DejaVu_Sans_Condensed','DejaVu_Sans','Liberation_Sans',sans-serif] text-[7px] leading-[10px] text-[#111]">
      <TitleBar />
      <MenuBar />
      <Toolbars />
      <div className="flex flex-1">
        <aside className="flex w-[162px] shrink-0">
          <div className="flex w-[143px] flex-col"><PropertyPanel /><LocationPanel /></div>
          <div className="flex w-[16px] flex-col border-l border-[#c9c8d0] bg-[#f7f7f9]">
            <div className="flex h-[258px] flex-col">
              <StripControls side="l" />
              <SideTab icon="props" label="Properties" active cls="h-[58px]" />
            </div>
            <div className="flex flex-col border-t border-[#c9c8d0]">
              <StripControls side="l" />
              <SideTab icon="pen" label="Drawing Info" active cls="h-[66px]" />
            </div>
          </div>
        </aside>
        <DrawingArea />
        <aside className="flex w-[156px] shrink-0 pl-[4px]">
          <div className="flex w-[15px] flex-col bg-[#f7f7f9]">
            <StripControls side="r" />
            <SideTab icon="insert" label="Insertion" active cls="h-[54px]" />
            <SideTab icon="view3" label="3D View" cls="h-[50px]" />
            <SideTab icon="filter" label="Display Filter" cls="h-[69px]" />
            <SideTab icon="world" label="Internet" cls="h-[49px]" />
          </div>
          <CatalogPanel />
        </aside>
      </div>
      <div role="toolbar" aria-label="Dimensions" className="flex h-[23px] items-center border-y border-[#b9b8c0] pl-[3px]">
        <Tools names={["box3d", "dim"]} /><span className="ml-[26px] w-px self-stretch bg-[#b9b8c0]" />
      </div>
      <footer className="flex h-[13px] items-center justify-between bg-[#eff3f6] pt-[2px] pr-[38px] pl-[1px]"><span>Click and drag to change position</span><span>NUM</span></footer>
      <div className="flex h-[3px] border-t border-[#4377b8]"><span className="w-[9%] bg-[#6cb870]" /><span className="w-[73%] bg-[#7db4f0]" /><span className="flex-1 bg-white" /></div>
    </div>
  );
}
